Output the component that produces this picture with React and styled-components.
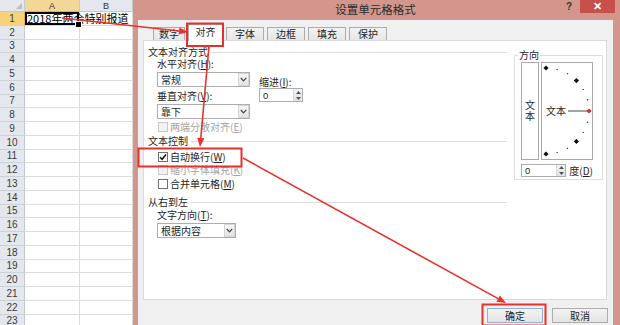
import React from "react";
import styled, { createGlobalStyle } from "styled-components";

const GlobalStyle = createGlobalStyle`
  html, body { margin: 0; padding: 0; background: #ffffff; }
  body { font-family: "Noto Sans CJK SC", "Noto Sans", sans-serif; color: #1e1e1e; }
  * { box-sizing: border-box; }
`;

const Page = styled.div`
  position: relative;
  width: 620px;
  height: 325px;
  overflow: hidden;
  display: flex;
  background: #fff;
`;

/* ---------- spreadsheet ---------- */
const Sheet = styled.div`
  width: 133px;
  flex: none;
  display: grid;
  grid-template-columns: 25px 55px 53px;
  grid-template-rows: 12px repeat(23, 13.75px);
  align-content: start;
`;

const Corner = styled.div`
  position: relative;
  background: #e4e8ee;
  border-right: 1px solid #c3c9d1;
  border-bottom: 1px solid #c3c9d1;
  &::after {
    content: "";
    position: absolute;
    right: 2px;
    bottom: 2px;
    border-left: 6px solid transparent;
    border-bottom: 6px solid #b9c0c8;
  }
`;

const ColHead = styled.div`
  display: flex;
  align-items: center;
  justify-content: center;
  font-family: "Liberation Sans", sans-serif;
  font-size: 9px;
  color: #333;
  background: ${(p) => (p.$selected ? "#f3d796" : "#e4e8ee")};
  border-right: 1px solid #c3c9d1;
  border-bottom: 1px solid ${(p) => (p.$selected ? "#e2b04f" : "#c3c9d1")};
`;

const RowHead = styled.div`
  display: flex;
  align-items: center;
  justify-content: center;
  font-family: "Liberation Sans", sans-serif;
  font-size: 10px;
  color: #3a3a3a;
  background: ${(p) => (p.$selected ? "#f6d27a" : "#e4e8ee")};
  border-right: 1px solid ${(p) => (p.$selected ? "#e2b04f" : "#c3c9d1")};
  border-bottom: 1px solid #cdd2d9;
`;

const Cell = styled.div`
  position: relative;
  border-right: 1px solid #dcdcdc;
  border-bottom: 1px solid #dcdcdc;
  font-size: 11px;
  line-height: 13px;
  white-space: nowrap;
  color: #000;
  padding-left: 2px;
  z-index: ${(p) => (p.$active ? 1 : 0)};
  box-shadow: ${(p) => (p.$active ? "inset 0 0 0 2px #000" : "none")};
  &::after {
    content: "";
    display: ${(p) => (p.$active ? "block" : "none")};
    position: absolute;
    right: -3px;
    bottom: -3px;
    width: 5px;
    height: 5px;
    background: #000;
    border: 1px solid #fff;
  }
`;

/* ---------- dialog frame ---------- */
const Dialog = styled.div`
  flex: 1;
  display: flex;
  flex-direction: column;
  background: #d3968d;
  padding: 0 7px 0 5px;
`;

const TitleBar = styled.div`
  height: 20px;
  display: grid;
  grid-template-columns: 1fr auto 1fr;
  align-items: start;
`;

const Title = styled.div`
  grid-column: 2;
  font-size: 11.5px;
  line-height: 18px;
  color: #2b2b2b;
`;

const Controls = styled.div`
  grid-column: 3;
  justify-self: end;
  display: flex;
  align-items: flex-start;
  margin-right: -2px;
`;

const Help = styled.span`
  font-family: "Liberation Sans", sans-serif;
  font-weight: bold;
  font-size: 10px;
  line-height: 13px;
  color: #333;
  margin-right: 8px;
`;

const Close = styled.span`
  width: 35px;
  height: 13px;
  background: #c7504a;
  color: #fff;
  display: flex;
  align-items: center;
  justify-content: center;
  font-family: "Liberation Sans", sans-serif;
  font-size: 11px;
  font-weight: bold;
`;

const Body = styled.div`
  flex: 1;
  background: #f0f0f0;
  padding: 3px 6px 0 5px;
  display: flex;
  flex-direction: column;
`;

const Tabs = styled.div`
  height: 18px;
  display: flex;
  align-items: flex-end;
  gap: 3px;
  padding-left: 10px;
  margin-bottom: -1px;
  position: relative;
  z-index: 1;
`;

const Tab = styled.div`
  width: ${(p) => p.$w}px;
  height: ${(p) => (p.$active ? 17 : 13)}px;
  margin-bottom: ${(p) => (p.$active ? 0 : 1)}px;
  border: 1px solid #acacac;
  border-bottom: none;
  background: ${(p) => (p.$active ? "#ffffff" : "linear-gradient(#f2f2f2, #e6e6e6)")};
  font-size: 10px;
  line-height: ${(p) => (p.$active ? 14 : 12)}px;
  text-align: center;
  color: #1e1e1e;
`;

const Panel = styled.div`
  height: 260px;
  border: 1px solid #d9d9d9;
  background: #fff;
  display: flex;
  align-items: flex-start;
  padding: 0 3px 0 4px;
`;

const LeftCol = styled.div`
  width: 359px;
  display: flex;
  flex-direction: column;
`;

const SectionTitle = styled.div`
  display: flex;
  align-items: center;
  height: 12px;
  margin-top: ${(p) => p.$top || 0}px;
  font-size: 10px;
  line-height: 12px;
  &::after {
    content: "";
    flex: 1;
    height: 1px;
    background: #dcdcdc;
    margin-left: 3px;
  }
`;

const Indent = styled.div`
  padding-left: 9px;
  display: flex;
  flex-direction: column;
  align-items: flex-start;
`;

const Row = styled.div`
  display: flex;
  align-items: flex-start;
`;

const FieldCol = styled.div`
  display: flex;
  flex-direction: column;
`;

const IndentCol = styled.div`
  display: flex;
  flex-direction: column;
  margin-left: 9px;
  padding-top: 18px;
`;

const Label = styled.div`
  font-size: 10px;
  line-height: 12px;
  height: 12px;
  white-space: nowrap;
  margin-top: ${(p) => p.$top || 0}px;
  color: ${(p) => (p.$disabled ? "#a3a3a3" : "#1e1e1e")};
  u { text-decoration: underline; text-underline-offset: 1px; }
`;

const Select = styled.div`
  width: ${(p) => p.$w}px;
  height: 15px;
  margin-top: 2px;
  border: 1px solid #abadb3;
  background: #fff;
  display: flex;
  align-items: center;
  font-size: 10px;
  line-height: 13px;
  padding-left: 3px;
`;

const SelectArrow = styled.span`
  margin-left: auto;
  width: 11px;
  height: 13px;
  border: 1px solid #d6d6d6;
  background: linear-gradient(#f6f6f6, #e4e4e4);
  display: flex;
  align-items: center;
  justify-content: center;
`;

const Spinner = styled.div`
  width: ${(p) => p.$w}px;
  height: ${(p) => p.$h}px;
  border: 1px solid #abadb3;
  background: #fff;
  display: flex;
  font-family: "Liberation Sans", sans-serif;
  font-size: 9.5px;
`;

const SpinValue = styled.span`
  flex: 1;
  padding-left: 3px;
  display: flex;
  align-items: center;
`;

const SpinButtons = styled.span`
  width: 9px;
  display: flex;
  flex-direction: column;
  background: linear-gradient(#f4f4f4, #e2e2e2);
  border-left: 1px solid #d6d6d6;
`;

const SpinHalf = styled.span`
  flex: 1;
  display: flex;
  align-items: center;
  justify-content: center;
`;

const CheckRow = styled.div`
  display: flex;
  align-items: center;
  height: 12px;
  margin-top: ${(p) => p.$top || 0}px;
  padding-left: 10px;
  gap: 2px;
`;

const Box = styled.span`
  width: 10px;
  height: 10px;
  border: 1px solid ${(p) => (p.$disabled ? "#c8c8c8" : "#707070")};
  background: ${(p) => (p.$disabled ? "#f2f2f2" : "#fff")};
  display: flex;
  align-items: center;
  justify-content: center;
`;

const OrientGroup = styled.div`
  position: relative;
  width: 89px;
  height: 125px;
  margin: 14px 0 0 7px;
  border: 1px solid #dcdcdc;
  padding: 6px 9px 0 6px;
  display: flex;
  flex-direction: column;
`;

const Legend = styled.span`
  position: absolute;
  top: -7px;
  left: 3px;
  padding: 0 1px;
  background: #fff;
  font-size: 10px;
  line-height: 12px;
`;

const OrientRow = styled.div`
  display: flex;
  gap: 2px;
`;

const VerticalBox = styled.div`
  width: 18px;
  height: 98px;
  border: 1px solid #a9a9a9;
  display: flex;
  align-items: center;
  justify-content: center;
  writing-mode: vertical-rl;
  text-orientation: upright;
  font-size: 10px;
  letter-spacing: 1px;
`;

const DialBox = styled.div`
  width: 52px;
  height: 98px;
  border: 1px solid #a9a9a9;
  display: flex;
`;

const DegreeRow = styled.div`
  display: flex;
  align-items: center;
  gap: 3px;
  margin-top: 4px;
`;

const ButtonRow = styled.div`
  display: flex;
  justify-content: flex-end;
  gap: 9px;
  padding-top: 8px;
  margin-right: -1px;
`;

const Button = styled.div`
  width: 56px;
  height: 15px;
  border: 1px solid ${(p) => (p.$primary ? "#8fb2d6" : "#adadad")};
  background: linear-gradient(#f3f3f3, #e4e4e4);
  font-size: 10px;
  line-height: 13px;
  text-align: center;
  color: #1e1e1e;
`;

const Annotations = styled.svg`
  position: absolute;
  left: 0;
  top: 0;
  pointer-events: none;
  z-index: 5;
`;

/* ---------- small drawings ---------- */
const Chevron = () => (
  <svg width="7" height="5" viewBox="0 0 7 5">
    <path d="M0.8 1 L3.5 3.8 L6.2 1" fill="none" stroke="#444" strokeWidth="1.2" />
  </svg>
);

const TriUp = () => (
  <svg width="5" height="3" viewBox="0 0 5 3">
    <path d="M0 3 L2.5 0 L5 3 Z" fill="#555" />
  </svg>
);
const TriDown = () => (
  <svg width="5" height="3" viewBox="0 0 5 3">
    <path d="M0 0 L2.5 3 L5 0 Z" fill="#555" />
  </svg>
);

const Check = () => (
  <svg width="8" height="8" viewBox="0 0 8 8">
    <path d="M1 4.2 L3.1 6.3 L7 1.5" fill="none" stroke="#111" strokeWidth="1.5" />
  </svg>
);

const Spin = ({ w, h, value }) => (
  <Spinner $w={w} $h={h}>
    <SpinValue>{value}</SpinValue>
    <SpinButtons>
      <SpinHalf>
        <TriUp />
      </SpinHalf>
      <SpinHalf>
        <TriDown />
      </SpinHalf>
    </SpinButtons>
  </Spinner>
);

const Dial = () => {
  const cx = 4;
  const cy = 48;
  const r = 43;
  const dots = [];
  for (let a = 90; a >= -90; a -= 15) {
    if (a === 0) continue;
    const rad = (a * Math.PI) / 180;
    const x = cx + r * Math.cos(rad);
    const y = cy - r * Math.sin(rad);
    const big = a % 45 === 0;
    const s = big ? 2.6 : 0.8;
    dots.push(
      <path
        key={a}
        d={`M${x} ${y - s} L${x + s} ${y} L${x} ${y + s} L${x - s} ${y} Z`}
        fill="#111"
      />
    );
  }
  return (
    <svg width="50" height="96" viewBox="0 0 50 96">
      {dots}
      <text x="4" y="52" fontSize="10" fill="#1e1e1e" fontFamily='"Noto Sans CJK SC", sans-serif'>
        文本
      </text>
      <line x1="26" y1="48" x2="45" y2="48" stroke="#8a8a8a" strokeWidth="1.6" />
      <path d="M47 45.4 L49.6 48 L47 50.6 L44.4 48 Z" fill="#d42a2a" />
    </svg>
  );
};

const Arrow = ({ x1, y1, x2, y2 }) => {
  const ang = Math.atan2(y2 - y1, x2 - x1);
  const len = 9;
  const half = 3.6;
  const bx = x2 - len * Math.cos(ang);
  const by = y2 - len * Math.sin(ang);
  const px = -Math.sin(ang) * half;
  const py = Math.cos(ang) * half;
  return (
    <g>
      <line x1={x1} y1={y1} x2={bx} y2={by} stroke="#e8322b" strokeWidth="1.6" />
      <path d={`M${x2} ${y2} L${bx + px} ${by + py} L${bx - px} ${by - py} Z`} fill="#e8322b" />
    </g>
  );
};

const rows = Array.from({ length: 23 }, (_, i) => i + 1);
const tabs = [
  { label: "数字", w: 32 },
  { label: "对齐", w: 35, active: true },
  { label: "字体", w: 38 },
  { label: "边框", w: 38 },
  { label: "填充", w: 38 },
  { label: "保护", w: 38 },
];

export default function App() {
  return (
    <>
      <GlobalStyle />
      <Page>
        <Sheet>
          <Corner />
          <ColHead $selected>A</ColHead>
          <ColHead>B</ColHead>
          {rows.map((r) => (
            <React.Fragment key={r}>
              <RowHead $selected={r === 1}>{r}</RowHead>
              <Cell $active={r === 1}>{r === 1 ? "2018年两会特别报道" : null}</Cell>
              <Cell />
            </React.Fragment>
          ))}
        </Sheet>

        <Dialog>
          <TitleBar>
            <Title>设置单元格格式</Title>
            <Controls>
              <Help>?</Help>
              <Close>✕</Close>
            </Controls>
          </TitleBar>
          <Body>
            <Tabs>
              {tabs.map((t) => (
                <Tab key={t.label} $w={t.w} $active={t.active}>
                  {t.label}
                </Tab>
              ))}
            </Tabs>
            <Panel>
              <LeftCol>
                <SectionTitle $top={5}>文本对齐方式</SectionTitle>
                <Indent>
                  <Row>
                    <FieldCol>
                      <Label>
                        水平对齐(<u>H</u>):
                      </Label>
                      <Select $w={93}>
                        常规
                        <SelectArrow>
                          <Chevron />
                        </SelectArrow>
                      </Select>
                      <Label $top={3}>
                        垂直对齐(<u>V</u>):
                      </Label>
                      <Select $w={93}>
                        靠下
                        <SelectArrow>
                          <Chevron />
                        </SelectArrow>
                      </Select>
                    </FieldCol>
                    <IndentCol>
                      <Label>
                        缩进(<u>I</u>):
                      </Label>
                      <Spin w={44} h={14} value="0" />
                    </IndentCol>
                  </Row>
                </Indent>
                <CheckRow $top={2}>
                  <Box $disabled />
                  <Label $disabled>
                    两端分散对齐(<u>E</u>)
                  </Label>
                </CheckRow>
                <SectionTitle $top={2}>文本控制</SectionTitle>
                <CheckRow $top={4}>
                  <Box>
                    <Check />
                  </Box>
                  <Label>
                    自动换行(<u>W</u>)
                  </Label>
                </CheckRow>
                <CheckRow $top={1}>
                  <Box $disabled />
                  <Label $disabled>
                    缩小字体填充(<u>K</u>)
                  </Label>
                </CheckRow>
                <CheckRow $top={2}>
                  <Box />
                  <Label>
                    合并单元格(<u>M</u>)
                  </Label>
                </CheckRow>
                <SectionTitle $top={6}>从右到左</SectionTitle>
                <Indent>
                  <Label $top={1}>
                    文字方向(<u>T</u>):
                  </Label>
                  <Select $w={79}>
                    根据内容
                    <SelectArrow>
                      <Chevron />
                    </SelectArrow>
                  </Select>
                </Indent>
              </LeftCol>

              <OrientGroup>
                <Legend>方向</Legend>
                <OrientRow>
                  <VerticalBox>文本</VerticalBox>
                  <DialBox>
                    <Dial />
                  </DialBox>
                </OrientRow>
                <DegreeRow>
                  <Spin w={50} h={13} value="0" />
                  <Label>
                    度(<u>D</u>)
                  </Label>
                </DegreeRow>
              </OrientGroup>
            </Panel>
            <ButtonRow>
              <Button $primary>确定</Button>
              <Button>取消</Button>
            </ButtonRow>
          </Body>
        </Dialog>

        <Annotations width="620" height="325" viewBox="0 0 620 325">
          <Arrow x1={62} y1={18} x2={188} y2={32} />
          <Arrow x1={209} y1={46} x2={200} y2={147} />
          <Arrow x1={243} y1={158} x2={506} y2={303} />
          <rect x="187" y="23.5" width="36" height="22.5" fill="none" stroke="#e53030" strokeWidth="2" />
          <rect x="138.5" y="148.5" width="103" height="18" fill="none" stroke="#e53030" strokeWidth="2" />
          <rect x="482.5" y="304.5" width="63" height="21" fill="none" stroke="#e53030" strokeWidth="2" />
        </Annotations>
      </Page>
    </>
  );
}
